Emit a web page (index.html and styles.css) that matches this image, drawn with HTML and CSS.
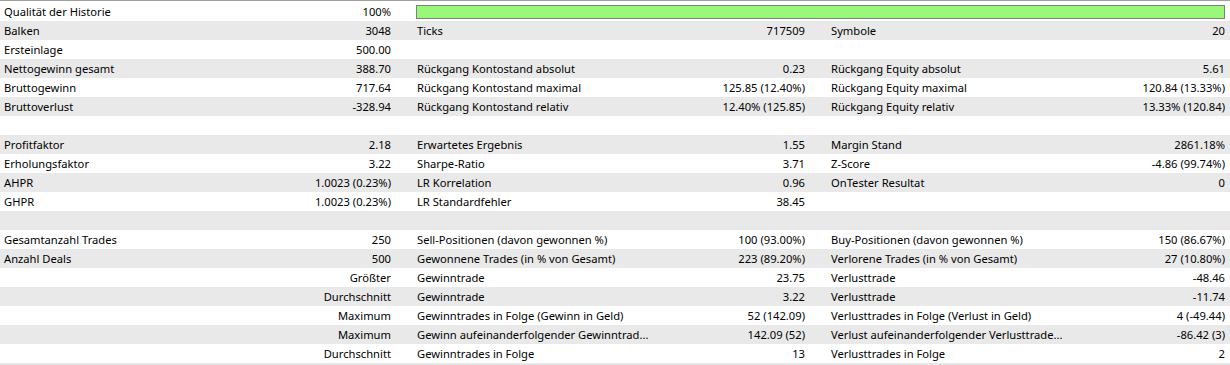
FILE: index.html
```html
<!DOCTYPE html>
<html lang="de">
<head>
<meta charset="utf-8">
<title>Bericht</title>
<link rel="stylesheet" href="styles.css">
</head>
<body>
<div class="report">
  <div class="row">
    <div class="cell"><span>Qualität der Historie</span><span>100%</span></div>
    <div class="cell bar-cell"><div class="bar"></div></div>
  </div>
  <div class="row alt">
    <div class="cell"><span>Balken</span><span>3048</span></div>
    <div class="cell"><span>Ticks</span><span>717509</span></div>
    <div class="cell"><span>Symbole</span><span>20</span></div>
  </div>
  <div class="row">
    <div class="cell"><span>Ersteinlage</span><span>500.00</span></div>
    <div class="cell"></div>
    <div class="cell"></div>
  </div>
  <div class="row alt">
    <div class="cell"><span>Nettogewinn gesamt</span><span>388.70</span></div>
    <div class="cell"><span>Rückgang Kontostand absolut</span><span>0.23</span></div>
    <div class="cell"><span>Rückgang Equity absolut</span><span>5.61</span></div>
  </div>
  <div class="row">
    <div class="cell"><span>Bruttogewinn</span><span>717.64</span></div>
    <div class="cell"><span>Rückgang Kontostand maximal</span><span>125.85 (12.40%)</span></div>
    <div class="cell"><span>Rückgang Equity maximal</span><span>120.84 (13.33%)</span></div>
  </div>
  <div class="row alt">
    <div class="cell"><span>Bruttoverlust</span><span>-328.94</span></div>
    <div class="cell"><span>Rückgang Kontostand relativ</span><span>12.40% (125.85)</span></div>
    <div class="cell"><span>Rückgang Equity relativ</span><span>13.33% (120.84)</span></div>
  </div>
  <div class="row">
    <div class="cell"></div><div class="cell"></div><div class="cell"></div>
  </div>
  <div class="row alt">
    <div class="cell"><span>Profitfaktor</span><span>2.18</span></div>
    <div class="cell"><span>Erwartetes Ergebnis</span><span>1.55</span></div>
    <div class="cell"><span>Margin Stand</span><span>2861.18%</span></div>
  </div>
  <div class="row">
    <div class="cell"><span>Erholungsfaktor</span><span>3.22</span></div>
    <div class="cell"><span>Sharpe-Ratio</span><span>3.71</span></div>
    <div class="cell"><span>Z-Score</span><span>-4.86 (99.74%)</span></div>
  </div>
  <div class="row alt">
    <div class="cell"><span>AHPR</span><span>1.0023 (0.23%)</span></div>
    <div class="cell"><span>LR Korrelation</span><span>0.96</span></div>
    <div class="cell"><span>OnTester Resultat</span><span>0</span></div>
  </div>
  <div class="row">
    <div class="cell"><span>GHPR</span><span>1.0023 (0.23%)</span></div>
    <div class="cell"><span>LR Standardfehler</span><span>38.45</span></div>
    <div class="cell"></div>
  </div>
  <div class="row alt">
    <div class="cell"></div><div class="cell"></div><div class="cell"></div>
  </div>
  <div class="row">
    <div class="cell"><span>Gesamtanzahl Trades</span><span>250</span></div>
    <div class="cell"><span>Sell-Positionen (davon gewonnen %)</span><span>100 (93.00%)</span></div>
    <div class="cell"><span>Buy-Positionen (davon gewonnen %)</span><span>150 (86.67%)</span></div>
  </div>
  <div class="row alt">
    <div class="cell"><span>Anzahl Deals</span><span>500</span></div>
    <div class="cell"><span>Gewonnene Trades (in % von Gesamt)</span><span>223 (89.20%)</span></div>
    <div class="cell"><span>Verlorene Trades (in % von Gesamt)</span><span>27 (10.80%)</span></div>
  </div>
  <div class="row">
    <div class="cell"><span></span><span>Größter</span></div>
    <div class="cell"><span>Gewinntrade</span><span>23.75</span></div>
    <div class="cell"><span>Verlusttrade</span><span>-48.46</span></div>
  </div>
  <div class="row alt">
    <div class="cell"><span></span><span>Durchschnitt</span></div>
    <div class="cell"><span>Gewinntrade</span><span>3.22</span></div>
    <div class="cell"><span>Verlusttrade</span><span>-11.74</span></div>
  </div>
  <div class="row">
    <div class="cell"><span></span><span>Maximum</span></div>
    <div class="cell"><span>Gewinntrades in Folge (Gewinn in Geld)</span><span>52 (142.09)</span></div>
    <div class="cell"><span>Verlusttrades in Folge (Verlust in Geld)</span><span>4 (-49.44)</span></div>
  </div>
  <div class="row alt">
    <div class="cell"><span></span><span>Maximum</span></div>
    <div class="cell"><span>Gewinn aufeinanderfolgender Gewinntrad...</span><span>142.09 (52)</span></div>
    <div class="cell"><span>Verlust aufeinanderfolgender Verlusttrade...</span><span>-86.42 (3)</span></div>
  </div>
  <div class="row">
    <div class="cell"><span></span><span>Durchschnitt</span></div>
    <div class="cell"><span>Gewinntrades in Folge</span><span>13</span></div>
    <div class="cell"><span>Verlusttrades in Folge</span><span>2</span></div>
  </div>
  <div class="row alt">
    <div class="cell"></div><div class="cell"></div><div class="cell"></div>
  </div>
</div>
</body>
</html>
```

FILE: styles.css
```css
html, body {
  margin: 0;
  padding: 0;
  background: #ffffff;
}

body {
  font-family: "Noto Sans", "DejaVu Sans", sans-serif;
  font-size: 11.2px;
  color: #000000;
  overflow: hidden;
}

.report {
  border-top: 1px solid #a0a0a0;
  padding-top: 1px;
}

.row {
  display: grid;
  grid-template-columns: 413px 414px 1fr;
  height: 19px;
  background: #ffffff;
}

.row.alt {
  background: #e9e9e9;
}

.cell {
  display: flex;
  justify-content: space-between;
  align-items: center;
  padding: 0 22px 0 4px;
  white-space: nowrap;
  line-height: 19px;
}

.cell:last-child {
  padding-right: 5px;
}

.bar-cell {
  grid-column: 2 / 4;
  padding: 0 4px 0 3px;
}

.bar {
  flex: 1;
  height: 14px;
  box-sizing: border-box;
  border: 1px solid #7f7f7f;
  background: #99f77a;
}
```
